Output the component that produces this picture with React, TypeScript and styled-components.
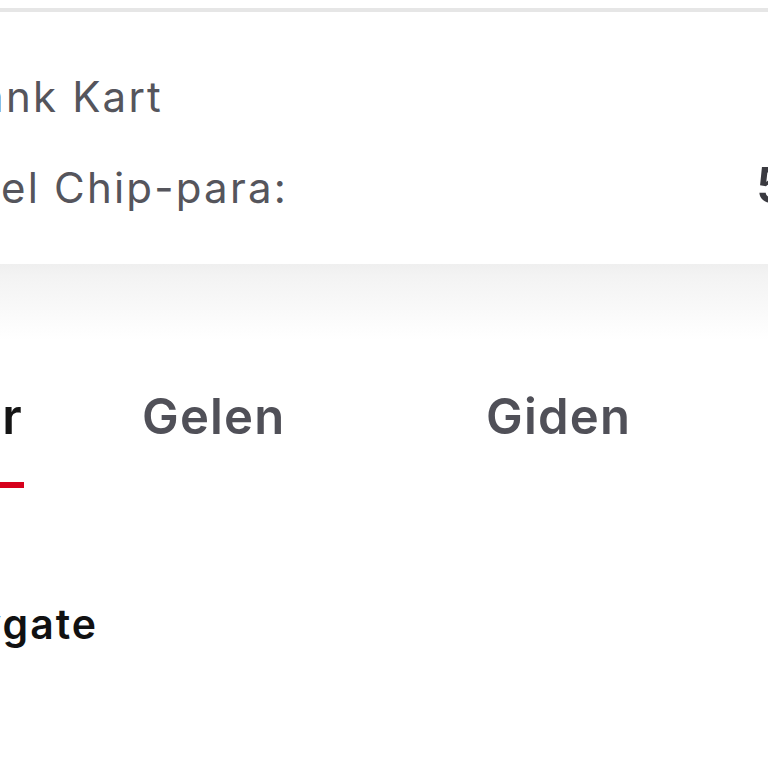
import styled, { createGlobalStyle } from 'styled-components';

const GlobalStyle = createGlobalStyle`
  html, body {
    margin: 0;
    padding: 0;
    background: #ffffff;
  }
  body {
    font-family: Inter, "Open Sans", "Liberation Sans", sans-serif;
    -webkit-font-smoothing: antialiased;
  }
`;

const Page = styled.div`
  width: 768px;
  height: 768px;
  overflow: hidden;
  background: #ffffff;
  padding-top: 8px;
  box-sizing: border-box;
`;

const Card = styled.section`
  border-top: 4px solid #e6e6e6;
  background: #ffffff;
  height: 256px;
  box-sizing: border-box;
  padding-top: 58px;
  display: flex;
  flex-direction: column;
  gap: 34px;
`;

const Row = styled.div`
  display: flex;
  align-items: baseline;
  color: #55555c;
  font-size: 42px;
  line-height: 54px;
  letter-spacing: 2.2px;
  white-space: nowrap;
`;

// cuts a text so only its right end is seen at the left screen edge
const Clip = styled.div<{ $width: number }>`
  width: ${(p) => p.$width}px;
  flex-shrink: 0;
  display: flex;
  justify-content: flex-end;
  overflow: hidden;
  white-space: nowrap;
`;

const Amount = styled.span`
  margin-left: 468px;
  font-size: 50px;
  font-weight: 600;
  letter-spacing: 0;
  color: #3a3a40;
`;

const Fade = styled.div`
  height: 96px;
  background: linear-gradient(#efefef 0, #f3f3f3 12px, #ffffff 76px);
`;

const Tabs = styled.nav`
  display: grid;
  grid-template-columns: 142px 344px auto;
  align-items: start;
  margin-top: 32px;
`;

const Tab = styled.div<{ $active?: boolean }>`
  display: flex;
  flex-direction: column;
  align-items: flex-start;
  font-size: 49px;
  line-height: 50px;
  font-weight: 600;
  letter-spacing: 1.2px;
  color: ${(p) => (p.$active ? '#151515' : '#505058')};
  white-space: nowrap;
`;

const Underline = styled.div`
  width: 24px;
  height: 6px;
  margin-top: 40px;
  background: #d6001c;
`;

const Section = styled.div`
  margin-top: 110px;
  font-size: 41px;
  line-height: 52px;
  font-weight: 600;
  letter-spacing: 2px;
  color: #111111;
`;

export default function App() {
  return (
    <>
      <GlobalStyle />
      <Page>
        <Card>
          <Row>
            <Clip $width={163}>Bank Kart</Clip>
          </Row>
          <Row>
            <Clip $width={288}>Turkcel Chip-para:</Clip>
            <Amount>5,00 TL</Amount>
          </Row>
        </Card>
        <Fade />
        <Tabs>
          <Tab $active>
            <Clip $width={23}>İşlemler</Clip>
            <Underline />
          </Tab>
          <Tab>Gelen</Tab>
          <Tab>Giden</Tab>
        </Tabs>
        <Section>
          <Clip $width={98}>Paygate</Clip>
        </Section>
      </Page>
    </>
  );
}
